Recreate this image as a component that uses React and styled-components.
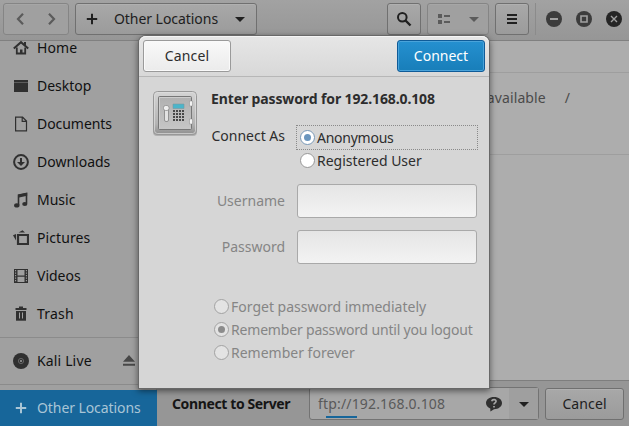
import React from "react";
import styled, { createGlobalStyle } from "styled-components";

const Global = createGlobalStyle`
  * { box-sizing: border-box; }
  html, body { margin: 0; padding: 0; overflow: hidden; }
  body { font-family: "Noto Sans", "Open Sans", sans-serif; font-size: 14px; color: #151515; }
`;

const Window = styled.div`
  position: relative;
  width: 629px;
  height: 426px;
  overflow: hidden;
  display: flex;
  flex-direction: column;
  background: #adadad;
`;

const Label = styled.span`
  display: block;
  line-height: 20px;
  white-space: nowrap;
  letter-spacing: ${(p) => p.$track || 0}px;
  font-weight: ${(p) => (p.$bold ? 700 : 400)};
  color: ${(p) => p.$color || "inherit"};
`;

const HeaderBar = styled.header`
  flex: none;
  height: 41px;
  padding: 3px 7px 0 3px;
  display: flex;
  align-items: flex-start;
  background: linear-gradient(#a2a2a2, #969696);
  border-bottom: 1px solid #808080;
`;

const HeaderButton = styled.div`
  flex: none;
  width: ${(p) => p.$width}px;
  height: 32px;
  margin-left: ${(p) => p.$gap || 0}px;
  padding: ${(p) => p.$pad || "0"};
  display: flex;
  align-items: center;
  justify-content: ${(p) => p.$justify || "center"};
  border: 1px solid ${(p) => (p.$dim ? "#858585" : "#707070")};
  border-radius: 3px;
  background: ${(p) => (p.$dim ? "#a0a0a0" : "linear-gradient(#a8a8a8, #9b9b9b)")};
  box-shadow: inset 0 1px ${(p) => (p.$dim ? "#a6a6a6" : "#b0b0b0")};
  color: ${(p) => (p.$dim ? "#5b5b5b" : "#202020")};
`;

const Spacer = styled.div`
  flex: 1;
`;

const HeaderDivider = styled.div`
  width: 1px;
  height: 32px;
  margin-left: 6px;
  background: #8b8b8b;
`;

const WindowControls = styled.div`
  height: 32px;
  margin-left: 10px;
  display: flex;
  align-items: center;
  gap: 14px;
`;

const Body = styled.div`
  flex: 1;
  min-height: 0;
  display: flex;
`;

const Sidebar = styled.nav`
  flex: none;
  width: 157px;
  background: #a0a0a0;
  box-shadow: inset -1px 0 #8d8d8d;
`;

const Places = styled.div`
  margin-top: -12px;
`;

const Place = styled.div`
  height: 38px;
  padding: 0 20px 0 13px;
  display: flex;
  align-items: center;
  gap: 8px;
  color: #111;

  ${Label} {
    line-height: 14px;
  }
`;

const OtherPlace = styled(Place)`
  margin-top: 5px;
  height: 37px;
  padding-bottom: 1px;
  background: #17669a;
  color: #a9c5d6;
`;

const PlaceIcon = styled.svg`
  flex: none;
  width: 16px;
  height: 16px;
  display: block;
  color: ${(p) => p.$color || "#303030"};
`;

const Rule = styled.hr`
  height: 1px;
  margin: 4px 0;
  border: 0;
  background: #8b8b8b;
`;

const Content = styled.main`
  flex: 1;
  min-width: 0;
  display: flex;
  flex-direction: column;
`;

const ListRow = styled.div`
  height: ${(p) => p.$height}px;
  padding: 15px 59px 0 0;
  display: flex;
  align-items: flex-start;
  justify-content: flex-end;
  gap: 19px;
  border-bottom: 1px solid #9e9e9e;
  color: #4a4a4a;
`;

const ConnectBar = styled.footer`
  height: 46px;
  margin-top: auto;
  padding: 0 5px 0 15px;
  display: flex;
  align-items: center;
  background: #969696;
  border-top: 1px solid #7e7e7e;
`;

const AddressField = styled.div`
  width: 230px;
  height: 33px;
  margin-left: auto;
  display: flex;
  align-items: stretch;
  border: 1px solid #737373;
  border-radius: 3px;
  background: #a7a7a7;
`;

const AddressText = styled.div`
  position: relative;
  flex: 1;
  padding: 0 7px 0 8px;
  display: flex;
  align-items: center;
  justify-content: space-between;
  color: #595959;
`;

const Progress = styled.div`
  position: absolute;
  left: 16px;
  bottom: 1px;
  width: 31px;
  height: 2px;
  background: #17669a;
`;

const DropButton = styled.div`
  width: 29px;
  display: flex;
  align-items: center;
  justify-content: center;
  background: #9f9f9f;
`;

const CancelServer = styled(HeaderButton)`
  margin-left: 6px;
`;

const Dialog = styled.section`
  position: absolute;
  left: 139px;
  top: 36px;
  width: 350px;
  height: 352px;
  border-radius: 7px 7px 0 0;
  background: #d6d6d6;
  color: #2d2d2d;
  box-shadow: 0 0 0 1px #686868, 0 2px 6px 1px rgba(0, 0, 0, 0.5);
`;

const DialogHeader = styled.div`
  height: 41px;
  padding: 4px 4px 0;
  display: flex;
  align-items: flex-start;
  justify-content: space-between;
  border-radius: 7px 7px 0 0;
  border-bottom: 1px solid #b7b7b7;
  background: linear-gradient(#e6e6e6, #d8d8d8);
  box-shadow: inset 0 1px #f5f5f5;
`;

const DialogButton = styled.button`
  width: 88px;
  height: 32px;
  padding: 0;
  display: flex;
  align-items: center;
  justify-content: center;
  font: inherit;
  border-radius: 3px;
  border: 1px solid ${(p) => (p.$primary ? "#0f5b98" : "#9a9a9a")};
  background: ${(p) =>
    p.$primary ? "linear-gradient(#2590d0, #187eb9)" : "linear-gradient(#f9f9f9, #ebebeb)"};
  box-shadow: inset 0 0 0 1px ${(p) => (p.$primary ? "#4aa3da" : "#fafafa")};
  color: ${(p) => (p.$primary ? "#fff" : "#2d2d2d")};
`;

const DialogBody = styled.div`
  padding: 12px 12px 0 13px;
  display: flex;
  gap: 14px;
`;

const Safe = styled.svg`
  flex: none;
  width: 46px;
  height: 48px;
  margin-top: 1px;
  display: block;
`;

const Form = styled.div`
  flex: 1;
  min-width: 0;
  margin-left: -1px;
`;

const Field = styled.div`
  display: grid;
  grid-template-columns: 74px 180px;
  column-gap: 12px;
  align-items: ${(p) => (p.$top ? "start" : "center")};
  justify-items: end;
  margin-top: ${(p) => p.$gap}px;
`;

const FieldLabel = styled(Label)`
  padding-top: ${(p) => p.$drop || 0}px;
`;

const RadioGroup = styled.div`
  width: 182px;
  margin-right: -1px;
`;

const RadioRow = styled.div`
  height: ${(p) => p.$height || 23}px;
  padding: 0 0 ${(p) => p.$lift || 0}px ${(p) => p.$inset || 0}px;
  display: flex;
  align-items: center;
  gap: 2px;
  outline: ${(p) => (p.$focus ? "1px dotted #8a8a8a" : "none")};
  outline-offset: -1px;
  color: ${(p) => (p.$muted ? "#858585" : "#2d2d2d")};
`;

const RadioDot = styled.span`
  flex: none;
  width: 15px;
  height: 15px;
  border-radius: 50%;
  display: grid;
  place-items: center;
  border: 1px solid ${(p) => (p.$muted ? "#a2a2a2" : p.$on ? "#7898b6" : "#979797")};
  background: ${(p) => (p.$muted ? "#e3e3e3" : "#fff")};

  &::after {
    content: "";
    width: ${(p) => (p.$on ? 7 : 0)}px;
    height: ${(p) => (p.$on ? 7 : 0)}px;
    border-radius: 50%;
    background: ${(p) => (p.$muted ? "#8c8c8c" : "#6b96be")};
  }
`;

const TextInput = styled.div`
  width: 180px;
  height: 34px;
  border: 1px solid #a9a9a9;
  border-radius: 3px;
  background: linear-gradient(#e5e5e5, #f3f3f3);
`;

const Remember = styled.div`
  margin-top: 31px;
  padding-left: 3px;
`;

const icons = {
  home: (
    <>
      <path d="M.8 8.600 8 2.200l7.200 6.400" fill="none" stroke="currentColor" strokeWidth="2" />
      <path d="M3.800 7.500v6h8.400v-6" fill="none" stroke="currentColor" strokeWidth="1.800" />
      <path d="M7 9.500h2.500V14H7zM11 2h2v4h-2z" fill="currentColor" />
    </>
  ),
  desktop: (
    <>
      <path d="M1 2h14v12H1z" fill="currentColor" />
      <path d="M1 4.500h14" stroke="#5c5c5c" strokeWidth="1" />
    </>
  ),
  documents: (
    <path d="M2.600 1.200h7L13.500 5v9.800H2.600zM9.200 1.200V5.400h4.300" fill="none" stroke="currentColor" strokeWidth="1.200" />
  ),
  downloads: (
    <>
      <circle cx="8" cy="8" r="6.900" fill="none" stroke="currentColor" strokeWidth="2" />
      <path d="M7 4h2v4h3l-4 4-4-4h3z" fill="currentColor" />
    </>
  ),
  music: (
    <>
      <path d="M5.500 13V3.200l8-1.700v10" fill="none" stroke="currentColor" strokeWidth="1.600" />
      <path d="M5 2.800 14.200.8v3L5 5.800z" fill="currentColor" />
      <ellipse cx="3.800" cy="13.400" rx="2.700" ry="2.100" fill="currentColor" />
      <ellipse cx="11.800" cy="12" rx="2.600" ry="2.100" fill="currentColor" />
    </>
  ),
  pictures: (
    <>
      <path d="M5 5h10v9H5z" fill="none" stroke="currentColor" strokeWidth="2.200" />
      <path d="M5.500 2.600 9.500.3 12 2.600zM3 4v6.500L0 5.300z" fill="currentColor" />
    </>
  ),
  videos: (
    <>
      <path d="M1 1h14v14H1z" fill="currentColor" />
      <path d="M4.500 2h7v5.400h-7zM4.500 8.800h7V14h-7z" fill="#a0a0a0" />
      <path d="M2.600 2v12.500M13.400 2v12.500" stroke="#a0a0a0" strokeWidth="1.100" strokeDasharray="1.300 1.200" />
    </>
  ),
  trash: (
    <>
      <path d="M2.500 3h11M6 1.500h4" fill="none" stroke="currentColor" strokeWidth="2" />
      <path d="M3 5h10v9.700H3z" fill="currentColor" />
      <path d="M6.500 6.500v6M9.500 6.500v6" stroke="#a0a0a0" strokeWidth="1" />
    </>
  ),
  disc: (
    <>
      <circle cx="8" cy="8" r="8" fill="currentColor" />
      <circle cx="8" cy="8" r="2.600" fill="none" stroke="#666" strokeWidth="1" />
      <circle cx="8" cy="8" r="1.100" fill="#999" />
    </>
  ),
  plus: <path d="M8 2.800v10.400M2.800 8h10.400" stroke="currentColor" strokeWidth="2" />,
  eject: <path d="M8 2 14 8.800H2zM2 10.800h12v2H2z" fill="currentColor" />,
  back: <path d="m11 2.700-5 5.300 5 5.300" fill="none" stroke="currentColor" strokeWidth="2.200" />,
  forward: <path d="m5 2.700 5 5.300-5 5.300" fill="none" stroke="currentColor" strokeWidth="2.200" />,
  down: <path d="M3 6h10L8 11z" fill="currentColor" />,
  search: (
    <>
      <circle cx="6.300" cy="6.300" r="4.300" fill="none" stroke="currentColor" strokeWidth="2" />
      <path d="m9.500 9.500 5 5" stroke="currentColor" strokeWidth="2.400" />
    </>
  ),
  list: (
    <path d="M2 3h4v4H2zM2 9h4v4H2zM8 4h6v2H8zM8 10h6v2H8z" fill="currentColor" />
  ),
  menu: <path d="M3 4h10M3 8h10M3 12h10" stroke="currentColor" strokeWidth="2" />,
  minimise: (
    <>
      <circle cx="8" cy="8" r="8" fill="currentColor" />
      <path d="M4 8h8" stroke="#a0a0a0" strokeWidth="2" />
    </>
  ),
  maximise: (
    <>
      <circle cx="8" cy="8" r="8" fill="currentColor" />
      <path d="M5 5h6v6H5z" fill="none" stroke="#a0a0a0" strokeWidth="1.600" />
    </>
  ),
  close: (
    <>
      <circle cx="8" cy="8" r="8" fill="currentColor" />
      <path d="m5 5 6 6m0-6-6 6" stroke="#a0a0a0" strokeWidth="1.400" />
    </>
  ),
  help: (
    <>
      <path d="M8 1c4.600 0 8 2.600 8 6s-3.400 6.200-8 6.200L4.400 15.400 4.300 12.500C1.700 11.500 0 9.500 0 7c0-3.400 3.400-6 8-6z" fill="currentColor" />
      <path d="M5.700 5.300C6.300 3 10.300 3.200 10 5.500 9.800 7 8 6.900 8 8.600M8 9.900v1.700" fill="none" stroke="#a7a7a7" strokeWidth="1.700" />
    </>
  ),
};

const Icon = ({ name, color = "currentColor" }) => (
  <PlaceIcon viewBox="0 0 16 16" $color={color}>
    {icons[name]}
  </PlaceIcon>
);

const places = [
  ["home", "Home", 0.1],
  ["desktop", "Desktop", 0],
  ["documents", "Documents", -0.05],
  ["downloads", "Downloads", 0],
  ["music", "Music", 0],
  ["pictures", "Pictures", 0.1],
  ["videos", "Videos", 0],
  ["trash", "Trash", 0.2],
];

const SafeIcon = () => (
  <Safe viewBox="0 0 46 48">
    <defs>
      <linearGradient id="case" x2="0" y2="1">
        <stop stopColor="#d4d4d4" />
        <stop offset=".75" stopColor="#b4b4b4" />
        <stop offset="1" stopColor="#8e8e8e" />
      </linearGradient>
      <linearGradient id="door" x2="0" y2="1">
        <stop stopColor="#b0b0b0" />
        <stop offset="1" stopColor="#c6c6c6" />
      </linearGradient>
    </defs>
    <rect x="1" y="3" width="44" height="43" rx="4" fill="#777" opacity=".4" />
    <rect x="1.500" y="1.500" width="43" height="43" rx="4" fill="url(#case)" stroke="#989898" />
    <rect x="2.500" y="2.500" width="41" height="41" rx="3" fill="none" stroke="#dedede" strokeOpacity=".7" />
    <rect x="6.500" y="6.500" width="33" height="33" rx="1" fill="url(#door)" stroke="#777" />
    <path d="M7.500 38.500v-31h31" fill="none" stroke="#ccc" />
    <rect x="12.500" y="17" width="4" height="14.500" rx="1.500" fill="#e2e2e2" stroke="#777" strokeWidth=".7" />
    <rect x="11.500" y="15.500" width="5.500" height="5" rx="2" fill="#eee" stroke="#858585" strokeWidth=".7" />
    <path d="M21 14h11v4.500H21z" fill="#4bb5ca" stroke="#79999f" strokeWidth=".6" />
    <path d="M21 21h11M21 24h11M21 27h11M21 30h11" stroke="#484848" strokeWidth="2" strokeDasharray="2 1" />
    <path d="M37.500 11h3v5h-3zM37.500 29h3v5h-3z" fill="#f2f2f2" stroke="#888" strokeWidth=".5" />
  </Safe>
);

const Radio = ({ children, on, muted, track, ...row }) => (
  <RadioRow $muted={muted} {...row}>
    <RadioDot $on={on} $muted={muted} />
    <Label $track={track}>{children}</Label>
  </RadioRow>
);

export default function App() {
  return (
    <>
      <Global />
      <Window>
        <HeaderBar>
          <HeaderButton $width={66} $dim $justify="space-between" $pad="0 8px">
            <Icon name="back" />
            <Icon name="forward" />
          </HeaderButton>
          <HeaderButton $width={182} $gap={6} $justify="space-between" $pad="0 8px">
            <Icon name="plus" />
            <Label $track={-0.05}>Other Locations</Label>
            <Icon name="down" />
          </HeaderButton>
          <Spacer />
          <HeaderButton $width={34}><Icon name="search" /></HeaderButton>
          <HeaderButton $width={62} $gap={6} $dim $justify="space-between" $pad="0 6px 0 8px">
            <Icon name="list" />
            <Icon name="down" />
          </HeaderButton>
          <HeaderButton $width={34} $gap={6}><Icon name="menu" /></HeaderButton>
          <HeaderDivider />
          <WindowControls>
            <Icon name="minimise" color="#3c3c3c" />
            <Icon name="maximise" color="#3c3c3c" />
            <Icon name="close" color="#252525" />
          </WindowControls>
        </HeaderBar>

        <Body>
          <Sidebar>
            <Places>
              {places.map(([icon, name, track]) => (
                <Place key={name}>
                  <Icon name={icon} color="#303030" />
                  <Label $track={track}>{name}</Label>
                </Place>
              ))}
              <Rule />
              <Place>
                <Icon name="disc" color="#303030" />
                <Label $track={0.15}>Kali Live</Label>
                <Spacer />
                <Icon name="eject" color="#484848" />
              </Place>
              <Rule />
              <OtherPlace>
                <Icon name="plus" />
                <Label $track={-0.08}>Other Locations</Label>
              </OtherPlace>
            </Places>
          </Sidebar>

          <Content>
            <ListRow $height={32} />
            <ListRow $height={82}>
              <Label $track={0.1}>available</Label>
              <Label>/</Label>
            </ListRow>
            <ConnectBar>
              <Label $bold $track={-0.38}>Connect to Server</Label>
              <AddressField>
                <AddressText>
                  <Label $track={0.17}>ftp://192.168.0.108</Label>
                  <Icon name="help" color="#303030" />
                  <Progress />
                </AddressText>
                <DropButton><Icon name="down" color="#202020" /></DropButton>
              </AddressField>
              <CancelServer $width={79}><Label $track={0.1}>Cancel</Label></CancelServer>
            </ConnectBar>
          </Content>
        </Body>

        <Dialog role="dialog">
          <DialogHeader>
            <DialogButton><Label $track={0.15}>Cancel</Label></DialogButton>
            <DialogButton $primary><Label>Connect</Label></DialogButton>
          </DialogHeader>
          <DialogBody>
            <SafeIcon />
            <Form>
              <Label $bold $track={-0.12}>Enter password for 192.168.0.108</Label>
              <Field $gap={16} $top>
                <FieldLabel $drop={1}>Connect As</FieldLabel>
                <RadioGroup>
                  <Radio on track={-0.25} $focus $height={25} $inset={4}>Anonymous</Radio>
                  <Radio $inset={4} $lift={2}>Registered User</Radio>
                </RadioGroup>
              </Field>
              <Field $gap={11}>
                <Label $color="#858585">Username</Label>
                <TextInput />
              </Field>
              <Field $gap={12}>
                <Label $color="#858585">Password</Label>
                <TextInput />
              </Field>
              <Remember>
                <Radio muted>Forget password immediately</Radio>
                <Radio muted on track={-0.18}>Remember password until you logout</Radio>
                <Radio muted>Remember forever</Radio>
              </Remember>
            </Form>
          </DialogBody>
        </Dialog>
      </Window>
    </>
  );
}
